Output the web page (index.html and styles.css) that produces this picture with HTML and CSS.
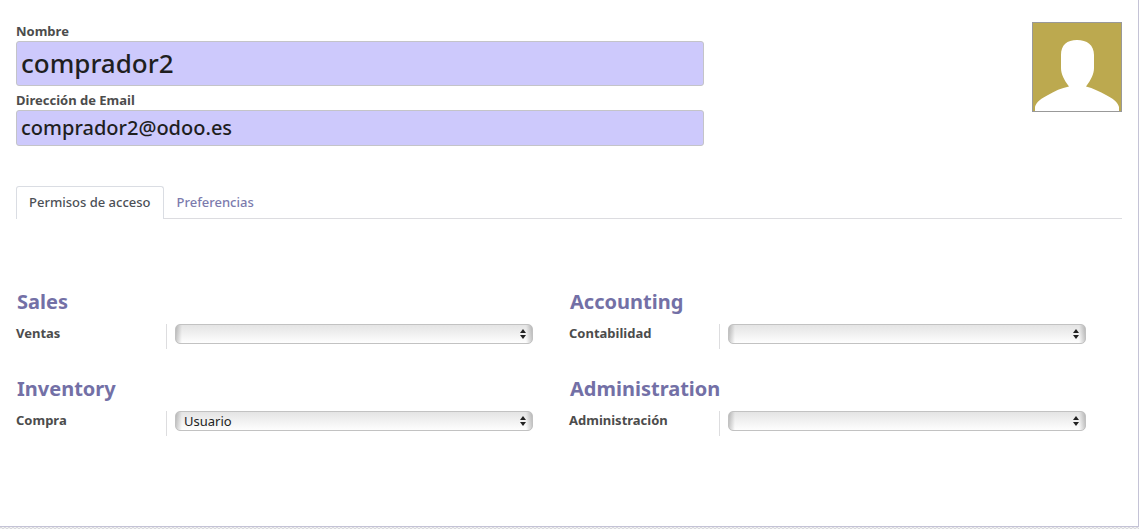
FILE: index.html
```html
<!DOCTYPE html>
<html lang="es">
<head>
<meta charset="utf-8">
<title>comprador2</title>
<link rel="stylesheet" href="styles.css">
</head>
<body>
<main class="sheet">
  <header class="header">
    <div class="identity">
      <label class="label" for="name">Nombre</label>
      <input class="field field-name" id="name" type="text" value="comprador2">
      <label class="label" for="email">Dirección de Email</label>
      <input class="field field-email" id="email" type="text" value="comprador2@odoo.es">
    </div>
    <svg class="avatar" viewBox="0 0 90 90" role="img" aria-label="Avatar">
      <rect x="0.5" y="0.5" width="89" height="89" fill="#bca94f" stroke="#999"/>
      <path fill="#fff" d="M3 89V85C4 80 10 76 16 73C23 69 29 66 37 64.500C32 58 29 52 29 46V33C29 23 35 18 45 18S62 23 62 33V46C62 52 59 58 54 64.500C61 66 68 70 74 73C80 76 86 80 87 85V89Z"/>
    </svg>
  </header>
  <div class="tabs" role="tablist">
    <button class="tab tab-active" type="button" role="tab" aria-selected="true">Permisos de acceso</button>
    <button class="tab" type="button" role="tab" aria-selected="false">Preferencias</button>
  </div>
  <div class="groups">
    <section>
      <h2 class="title">Sales</h2>
      <div class="row">
        <label class="label row-label" for="sales">Ventas</label>
        <div class="picker"><select class="select" id="sales"><option></option></select></div>
      </div>
    </section>
    <section>
      <h2 class="title">Accounting</h2>
      <div class="row">
        <label class="label row-label" for="accounting">Contabilidad</label>
        <div class="picker"><select class="select" id="accounting"><option></option></select></div>
      </div>
    </section>
    <section>
      <h2 class="title">Inventory</h2>
      <div class="row">
        <label class="label row-label" for="inventory">Compra</label>
        <div class="picker"><select class="select" id="inventory"><option>Usuario</option></select></div>
      </div>
    </section>
    <section>
      <h2 class="title">Administration</h2>
      <div class="row">
        <label class="label row-label" for="administration">Administración</label>
        <div class="picker"><select class="select" id="administration"><option></option></select></div>
      </div>
    </section>
  </div>
</main>
</body>
</html>
```
FILE: styles.css
```css
* {
  box-sizing: border-box;
}

body {
  margin: 0;
  min-height: 100vh;
  display: flex;
  flex-direction: column;
  padding-bottom: 2px;
  background: repeating-conic-gradient(#d9d9de 0 25%, #f2f2f2 0 50%) 0 0 / 4px 4px;
  color: #4c4c4c;
  font-family: "Lucida Grande", "Noto Sans", "Open Sans", sans-serif;
  font-size: 13px;
}

.sheet {
  flex: 1;
  padding: 22px 16px 16px;
  border: solid #c4c3d6;
  border-width: 0 1px 1px 0;
  background: #fff;
}

.header {
  display: flex;
  justify-content: space-between;
  align-items: flex-start;
  gap: 16px;
}

.identity {
  display: flex;
  flex-direction: column;
  flex: 0 1 688px;
}

.label {
  font-size: 13px;
  font-weight: 700;
  line-height: 19px;
  color: #4c4c4c;
}

.field {
  width: 100%;
  margin: 0;
  padding: 0 4px 2px;
  border: 1px solid #c4c4c8;
  border-radius: 3px;
  background: #cdc9fc;
  color: #1f1f1f;
  font-family: inherit;
  font-weight: 500;
}

.field-name {
  height: 45px;
  margin-bottom: 5px;
  font-size: 26px;
}

.field-email {
  height: 36px;
  font-size: 20px;
}

.avatar {
  flex: none;
  width: 90px;
  height: 90px;
}

.tabs {
  display: flex;
  margin-top: 40px;
  box-shadow: inset 0 -1px #dcdce0;
}

.tab {
  height: 33px;
  padding: 0 12px 2px;
  border: 1px solid transparent;
  border-bottom: 0;
  background: none;
  color: #7c7bad;
  font-family: inherit;
  font-size: 13px;
  font-weight: 500;
}

.tab-active {
  border-color: #dadde3;
  border-radius: 3px 3px 0 0;
  background: #fff;
  color: #4c5056;
}

.groups {
  display: grid;
  grid-template-columns: 1fr 1fr;
  row-gap: 24px;
  margin-top: 67px;
}

.title {
  margin: 0 0 6px;
  padding-left: 1px;
  color: #7370a6;
  font-size: 20px;
  font-weight: 700;
  line-height: 32px;
}

.row {
  display: flex;
  margin-right: 36px;
  height: 25px;
}

.row-label {
  width: 151px;
  margin-right: 8px;
  border-right: 1px solid #dddddf;
}

.picker {
  position: relative;
  flex: 1;
  height: 20px;
}

.picker::before,
.picker::after {
  content: "";
  position: absolute;
  right: 7px;
  border: solid transparent;
  border-width: 0 3px;
  pointer-events: none;
}

.picker::before {
  top: 5px;
  border-bottom: 4px solid #222;
}

.picker::after {
  top: 11px;
  border-top: 4px solid #222;
}

.select {
  display: block;
  appearance: none;
  width: 100%;
  height: 20px;
  padding: 0 24px 0 8px;
  border: 1px solid #c2c2c2;
  border-radius: 5px;
  background:
    linear-gradient(90deg, #0003, #0000 6px, #0000 calc(100% - 6px), #0003),
    linear-gradient(#e4e4e4, #fefefe);
  color: #222;
  font-family: inherit;
  font-size: 13px;
}
```
